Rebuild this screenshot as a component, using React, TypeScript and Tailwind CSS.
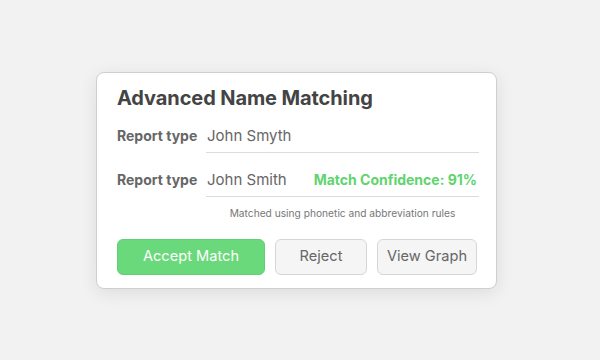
export default function App() {
  return (
    <div
      className="w-[600px] h-[360px] bg-[#f2f2f2] flex items-start pl-[96px] pt-[72px]"
      style={{ fontFamily: 'Inter, "Liberation Sans", sans-serif' }}
    >
      <div className="w-[401px] bg-white border border-[#cfcfcf] rounded-lg shadow-[0_4px_18px_rgba(0,0,0,0.09)] pl-5 pr-[17px] pt-[11px] pb-[13px]">
        <h1 className="text-[20px] font-bold text-[#444] leading-[28px] tracking-[-0.1px]">
          Advanced Name Matching
        </h1>

        {/* Row 1 */}
        <div className="flex items-end mt-[14px]">
          <div className="w-[89px] text-[14px] font-bold text-[#666] leading-[20px] pb-[7px]">Report type</div>
          <div className="flex-1 border-b border-[#dcdcdc] pb-[6px] pl-[1px] text-[15px] text-[#666] leading-[20px]">
            John Smyth
          </div>
        </div>

        {/* Row 2 */}
        <div className="flex items-end mt-[17px]">
          <div className="w-[89px] text-[14px] font-bold text-[#666] leading-[20px] pb-[7px]">Report type</div>
          <div className="flex-1 flex items-center justify-between border-b border-[#dcdcdc] pb-[6px] pl-[1px] leading-[20px]">
            <span className="text-[15px] text-[#666]">John Smith</span>
            <span className="text-[14px] font-bold text-[#5fd46f] pr-[2px]">Match Confidence: 91%</span>
          </div>
        </div>

        <div className="flex">
          <div className="w-[89px]" />
          <div className="flex-1 text-center text-[10.2px] text-[#777] mt-[8px] leading-[16px]">
            Matched using phonetic and abbreviation rules
          </div>
        </div>

        {/* Buttons */}
        <div className="flex items-center mt-[18px] pr-[2px] gap-[10px]">
          <button className="w-[148px] h-[36px] rounded-md bg-[#6ad97b] border border-[#62cf73] text-white text-[14.6px]">
            Accept Match
          </button>
          <button className="w-[92px] h-[36px] rounded-md bg-[#f5f5f5] border border-[#d6d6d6] text-[#666] text-[14.6px]">
            Reject
          </button>
          <button className="flex-1 h-[36px] rounded-md bg-[#f5f5f5] border border-[#d6d6d6] text-[#666] text-[14.6px]">
            View Graph
          </button>
        </div>
      </div>
    </div>
  )
}
